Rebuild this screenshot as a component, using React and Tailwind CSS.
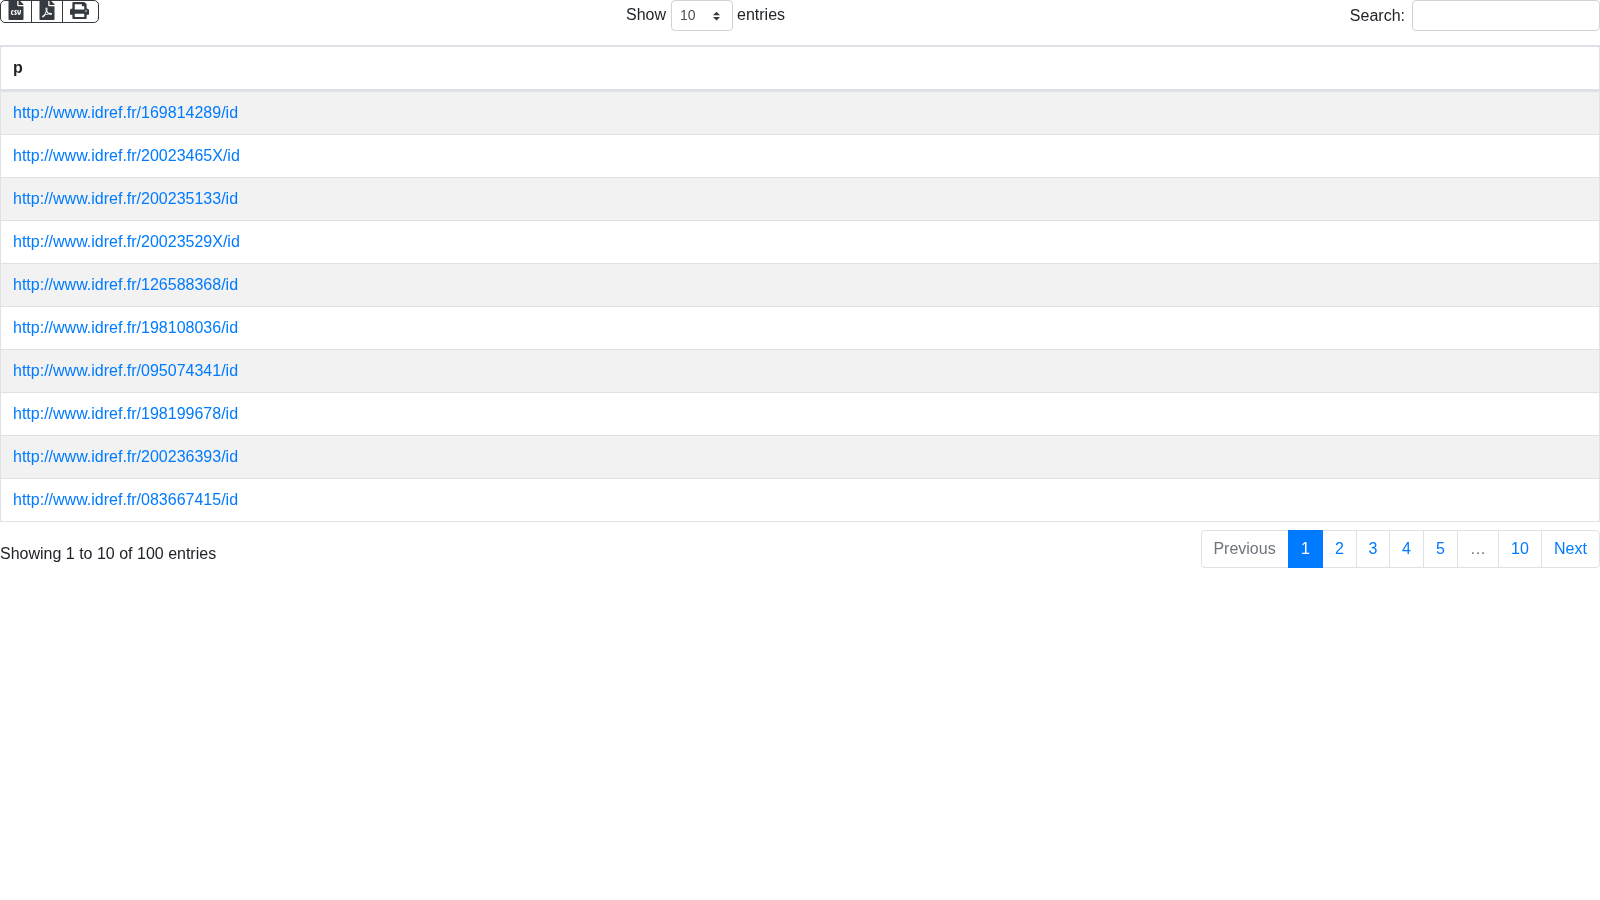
import { FaFileCsv, FaFilePdf, FaPrint } from "react-icons/fa";

const rows = [
  "169814289",
  "20023465X",
  "200235133",
  "20023529X",
  "126588368",
  "198108036",
  "095074341",
  "198199678",
  "200236393",
  "083667415",
];

const pages = [
  { label: "Previous", w: "w-[86px] pr-[1px]", kind: "off" },
  { label: "1", w: "w-[35px]", kind: "on" },
  { label: "2", w: "w-[33px] border-l-0" },
  { label: "3", w: "w-[33px]" },
  { label: "4", w: "w-[34px]" },
  { label: "5", w: "w-[34px]" },
  { label: "…", w: "w-[41px]", kind: "off" },
  { label: "10", w: "w-[43px]" },
  { label: "Next", w: "w-[58px]" },
];

const SortArrows = () => (
  <svg width="7" height="10" viewBox="0 0 8 10" className="absolute right-[12px] top-[10px]">
    <path d="M4 0 L8 4 H0 Z M4 10 L0 6 H8 Z" fill="#343a40" />
  </svg>
);

export default function App() {
  return (
    <div className="min-h-[900px] font-['Liberation_Sans',Arial,sans-serif] text-[16px] text-[#212529] will-change-transform">
      {/* toolbar */}
      <div className="grid grid-cols-[626px_1fr_auto] items-start h-[45px]">
        <div className="flex h-[23px] w-[99px] border border-[#343a40] rounded-[5px] text-[#343a40]">
          <div className="w-[31px] flex justify-center border-r border-[#343a40]">
            <FaFileCsv className="text-[20px] -mt-[1px]" />
          </div>
          <div className="w-[31px] flex justify-center border-r border-[#343a40]">
            <FaFilePdf className="text-[20px] -mt-[1px]" />
          </div>
          <div className="flex-1 flex justify-center pr-[2px]">
            <FaPrint className="w-[19px] h-[17px] mt-[1px]" preserveAspectRatio="none" />
          </div>
        </div>
        <div className="flex items-center h-[31px]">
          <span className="pb-[2px]">Show</span>
          <div className="relative ml-[5px] w-[62px] h-[31px] border border-[#ced4da] rounded-[4px] bg-white pl-[8px] text-[14px] leading-[29px] text-[#495057]">
            10
            <SortArrows />
          </div>
          <span className="ml-[4px] pb-[2px]">entries</span>
        </div>
        <div className="flex items-center h-[31px] gap-[7px]">
          <span>Search:</span>
          <input
            type="text"
            className="w-[188px] h-[31px] border border-[#ced4da] rounded-[4px] bg-white outline-none"
          />
        </div>
      </div>

      {/* table */}
      <div className="border-x border-b border-[#dee2e6]">
        <div className="h-[47px] border-t-2 border-b-[3px] border-[#dee2e6] px-[12px] flex items-center font-bold">
          p
        </div>
        {rows.map((id, i) => (
          <div
            key={id}
            className={`${i > 0 ? "h-[43px] border-t border-[#dee2e6]" : "h-[42px]"} px-[12px] flex items-center ${
              i % 2 === 0 ? "bg-[#f2f2f2]" : "bg-white"
            }`}
          >
            <a href="#" className="text-[#007bff]">
              http://www.idref.fr/{id}/id
            </a>
          </div>
        ))}
      </div>

      {/* footer */}
      <div className="flex justify-between items-start mt-[8px]">
        <div className="pt-[12px] leading-[24px]">Showing 1 to 10 of 100 entries</div>
        <div className="flex h-[38px] border border-[#dee2e6] rounded-[4px] bg-white">
          {pages.map((p, i) => (
            <div
              key={p.label}
              className={`${p.w} flex items-center justify-center ${
                i > 0 && p.label !== "2" ? "border-l border-[#dee2e6]" : ""
              } ${
                p.kind === "on"
                  ? "bg-[#007bff] text-white -my-px border-l-0"
                  : p.kind === "off"
                    ? "text-[#6c757d]"
                    : "text-[#007bff]"
              }`}
            >
              {p.label}
            </div>
          ))}
        </div>
      </div>
    </div>
  );
}
